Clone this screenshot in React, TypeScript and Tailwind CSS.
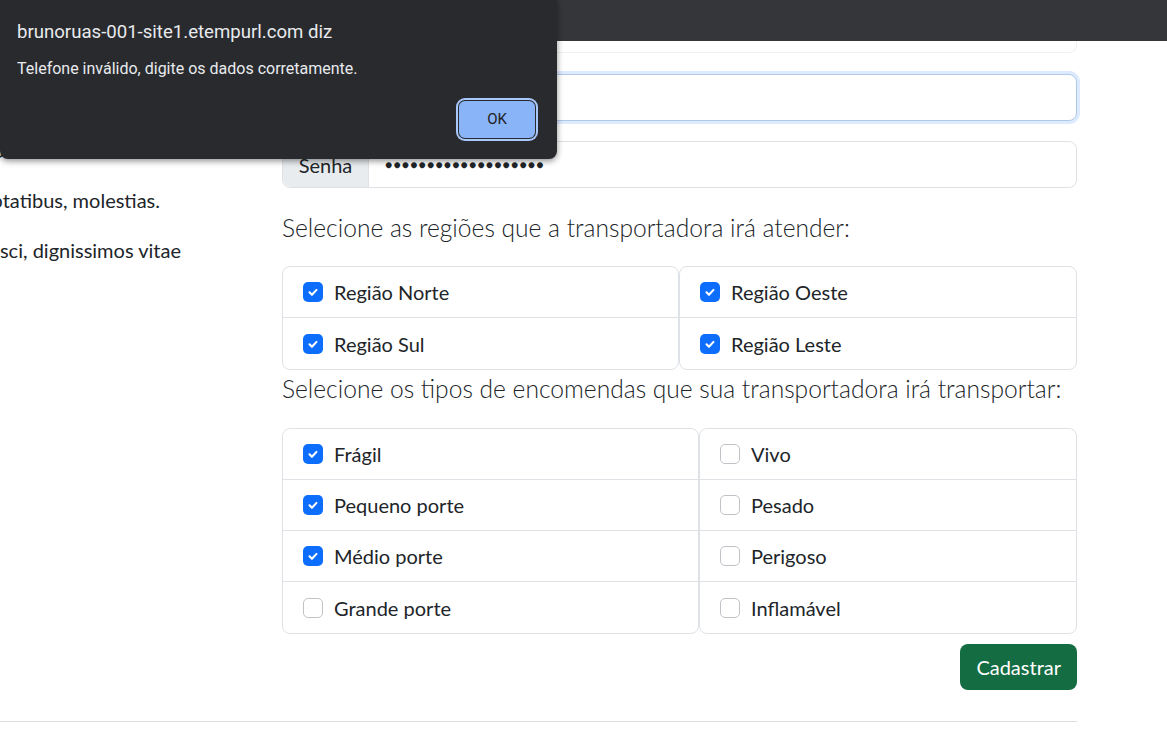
import React from "react";

interface CheckItemProps {
  label: string;
  checked?: boolean;
}

const CheckItem = ({ label, checked }: CheckItemProps) => {
  return (
    <div className="flex h-[51px] items-center gap-[11px] border-b border-[#dee2e6] px-5 last:border-b-0">
      {checked ? (
        <span className="flex h-5 w-5 items-center justify-center rounded-[5px] bg-[#0d6efd]">
          <svg width="14" height="14" viewBox="0 0 20 20" fill="none">
            <path
              d="M5 10.5l3.5 3.5l6.5-7"
              stroke="white"
              strokeWidth="3"
              strokeLinecap="round"
              strokeLinejoin="round"
            />
          </svg>
        </span>
      ) : (
        <span className="h-5 w-5 rounded-[5px] border border-[#bfc3c7] bg-white" />
      )}
      <span className="text-[20px] leading-[30px] text-[#212529]">{label}</span>
    </div>
  );
};

const ListGroup = ({
  items,
  className,
}: {
  items: CheckItemProps[];
  className: string;
}) => {
  return (
    <div className={`rounded-[8px] border border-[#dee2e6] bg-white ${className}`}>
      {items.map((item) => (
        <CheckItem key={item.label} label={item.label} checked={item.checked} />
      ))}
    </div>
  );
};

// linhas do texto da coluna esquerda, cortadas pela rolagem horizontal
const SideLine = ({ text, end }: { text: string; end: string }) => {
  return (
    <div className={`flex h-[30px] justify-end overflow-hidden whitespace-nowrap ${end}`}>
      <span className="text-[20px] leading-[30px] text-[#212529]">{text}</span>
    </div>
  );
};

const Alert = () => {
  return (
    <div className="absolute left-0 top-0 h-[159px] w-[557px] rounded-b-[8px] bg-[#292a2d] shadow-[0_2px_6px_rgba(0,0,0,0.45)] font-['Roboto',sans-serif]">
      <div className="px-[17px] pt-[20px]">
        <p className="text-[18.6px] leading-[24px] text-[#e8eaed]">
          brunoruas-001-site1.etempurl.com diz
        </p>
        <p className="mt-[14px] text-[16px] leading-[22px] text-[#e8eaed]">
          Telefone inválido, digite os dados corretamente.
        </p>
      </div>
      <div className="flex justify-end pr-[22px] pt-[21px]">
        <button className="h-[37px] w-[76px] rounded-[6px] bg-[#8ab4f8] text-[15px] text-[#202124] shadow-[0_0_0_1px_#292a2d,0_0_0_3px_#a8c7fa]">
          OK
        </button>
      </div>
    </div>
  );
};

export default function App() {
  const regioesA = [
    { label: "Região Norte", checked: true },
    { label: "Região Sul", checked: true },
  ];
  const regioesB = [
    { label: "Região Oeste", checked: true },
    { label: "Região Leste", checked: true },
  ];
  const tiposA = [
    { label: "Frágil", checked: true },
    { label: "Pequeno porte", checked: true },
    { label: "Médio porte", checked: true },
    { label: "Grande porte", checked: false },
  ];
  const tiposB = [
    { label: "Vivo" },
    { label: "Pesado" },
    { label: "Perigoso" },
    { label: "Inflamável" },
  ];

  return (
    <div className="relative h-[731px] w-[1167px] overflow-hidden bg-white font-['Lato',sans-serif]">
      <div className="h-[41px] bg-[#35363a]" />

      <div className="flex">
        <div className="w-[282px] shrink-0 pt-[94px]">
          <SideLine text="Lorem ipsum dolor sit amet, consectetur adip" end="w-[4px]" />
          <div className="mt-[20px]">
            <SideLine text="Lorem ipsum dolor sit amet voluptatibus, molestias." end="w-[160px]" />
          </div>
          <div className="mt-[20px]">
            <SideLine text="Quia, ullam adipisci, dignissimos vitae" end="w-[181px]" />
          </div>
        </div>

        <div className="w-[795px] shrink-0">
          <div className="h-[12px] rounded-b-[8px] border-x border-b border-[#eef0f2]" />

          <div className="mt-[21px] h-[47px] rounded-[8px] border border-[#b3c8e8] bg-white shadow-[0_0_0_3px_rgba(13,110,253,0.14)]" />

          <div className="mt-[20px] flex h-[47px] rounded-[8px] border border-[#dee2e6]">
            <div className="flex w-[86px] items-center justify-center rounded-l-[8px] border-r border-[#dee2e6] bg-[#e9ecef] text-[20px] text-[#212529]">
              Senha
            </div>
            <div className="flex items-center pl-4 text-[12px] tracking-[1.2px] text-[#212529]">
              ●●●●●●●●●●●●●●●●●●●
            </div>
          </div>

          <p className="mt-[21px] text-[24.6px] font-light leading-[37px] text-[#212529]">
            Selecione as regiões que a transportadora irá atender:
          </p>
          <div className="mt-[20px] flex">
            <ListGroup items={regioesA} className="w-[397px]" />
            <ListGroup items={regioesB} className="flex-1" />
          </div>

          <p className="text-[24.6px] font-light leading-[38px] text-[#212529]">
            Selecione os tipos de encomendas que sua transportadora irá transportar:
          </p>
          <div className="mt-[20px] flex">
            <ListGroup items={tiposA} className="w-[417px]" />
            <ListGroup items={tiposB} className="flex-1" />
          </div>

          <div className="mt-[10px] flex justify-end">
            <button className="h-[46px] rounded-[8px] bg-[#146c43] px-[16px] text-[20px] text-white">
              Cadastrar
            </button>
          </div>
        </div>
      </div>

      <div className="mt-[31px] w-[1077px] border-t border-[#dcdcdc]" />

      <Alert />
    </div>
  );
}
